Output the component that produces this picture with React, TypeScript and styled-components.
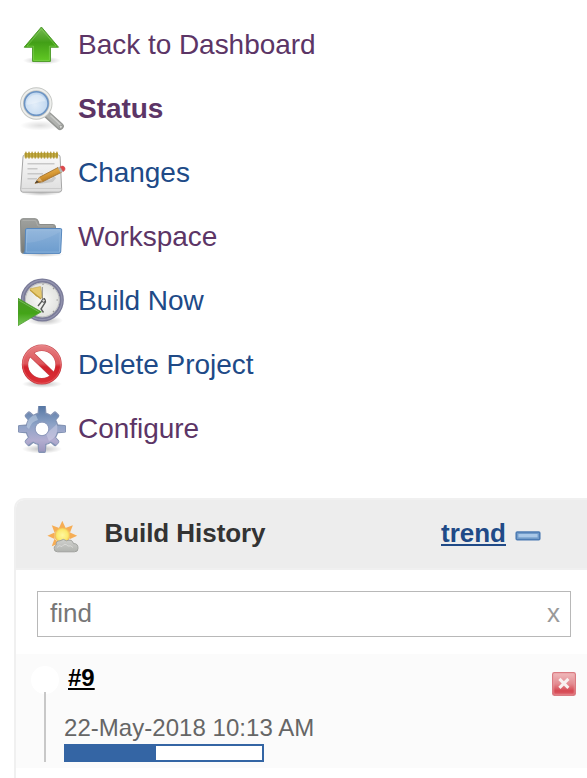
import React from "react";
import styled, { createGlobalStyle, css } from "styled-components";

const GlobalStyle = createGlobalStyle`
  body {
    margin: 0;
    background: #fff;
    font-family: "Liberation Sans", Helvetica, Arial, sans-serif;
    overflow: hidden;
  }
`;

const SidePanel = styled.div`
  width: 587px;
  height: 778px;
  overflow: hidden;
  background: #fff;
`;

const TaskList = styled.nav`
  display: flex;
  flex-direction: column;
  padding: 12px 18px 0;
  height: 498px;
  box-sizing: border-box;
`;

const Task = styled.div`
  display: flex;
  gap: 12px;
  height: 64px;
`;

const TaskIcon = styled.svg`
  flex: none;
  width: 48px;
  height: 48px;
  margin-top: 10px;
  filter: blur(0.6px);
`;

const TaskLink = styled.a<{ $visited?: boolean; $active?: boolean }>`
  font-size: 28px;
  line-height: 66px;
  letter-spacing: -0.03px;
  white-space: nowrap;
  color: ${(p) => (p.$visited ? "#5c3566" : "#204a87")};
  font-weight: ${(p) => (p.$active ? 700 : 400)};
`;

const HistoryPane = styled.section`
  margin-left: 14px;
  height: 300px;
  border: 2px solid #f0f0f0;
  border-right: 0;
  border-radius: 10px 0 0 0;
  box-sizing: border-box;
`;

const PaneHeader = styled.header`
  display: flex;
  align-items: flex-start;
  height: 70px;
  box-sizing: border-box;
  padding: 0 46px 0 31px;
  background: #ededed;
  border-bottom: 2px solid #f0f0f0;
  border-radius: 8px 0 0 0;
  line-height: 66px;
  font-size: 26px;
  font-weight: 700;
`;

const WeatherIcon = styled.svg`
  width: 32px;
  height: 32px;
  margin: 21px 25.5px 0 0;
  filter: blur(0.5px);
`;

const PaneTitle = styled.span`
  flex: 1;
  letter-spacing: -0.06px;
  color: #333;
`;

const underline = css`
  text-decoration: underline;
  text-decoration-thickness: 2px;
  text-underline-offset: 2px;
  text-decoration-skip-ink: none;
`;

const TrendLink = styled.a`
  ${underline}
  color: #204a87;
`;

const CollapseIcon = styled.svg`
  width: 26px;
  height: 10px;
  margin: 31px 0 0 9px;
  filter: blur(0.4px);
`;

const SearchBox = styled.div`
  display: flex;
  justify-content: space-between;
  box-sizing: border-box;
  width: 534px;
  height: 46px;
  margin: 21px 0 17px 21px;
  padding: 0 10px 0 12px;
  border: 1px solid #b8b8b8;
  font-size: 26px;
  line-height: 42px;
  color: #777;
`;

const ClearMark = styled.span`
  color: #999;
`;

const BuildRow = styled.div`
  display: flex;
  height: 114px;
  background: #fbfbfb;
`;

const Timeline = styled.div`
  display: flex;
  flex-direction: column;
  align-items: center;
  width: 28px;
  margin: 12px 5px 6px 15px;
`;

const StatusBall = styled.div`
  width: 28px;
  height: 28px;
  flex: none;
  border-radius: 50%;
  background: #fff;
`;

const TimelineStem = styled.div`
  width: 2px;
  flex: 1;
  margin-top: -2px;
  background: #c8c8c8;
`;

const BuildDetails = styled.div`
  flex: 1;
  display: flex;
  flex-direction: column;
  align-items: flex-start;
  font-size: 24px;
`;

const BuildNumber = styled.a`
  ${underline}
  margin: 9px 0 0 4px;
  line-height: 30px;
  font-weight: 700;
  color: #000;
`;

const BuildDate = styled.span`
  margin-top: 20px;
  line-height: 30px;
  letter-spacing: 0.04px;
  color: #666;
`;

const ProgressBar = styled.div`
  width: 200px;
  height: 18px;
  margin-top: 1px;
  box-sizing: border-box;
  border: 2px solid #3465a4;
  background: #fff;
`;

const ProgressFill = styled.div`
  width: 90px;
  height: 100%;
  background: #3465a4;
`;

const StopIcon = styled.svg`
  width: 26px;
  height: 26px;
  margin: 17px 10px 0 0;
  filter: blur(0.6px);
`;

const UpArrow = () => (
  <TaskIcon viewBox="0 0 48 48">
    <defs>
      <linearGradient id="upFill" x1="0" y1="0" x2="0" y2="1">
        <stop offset="0" stopColor="#79b956" />
        <stop offset=".45" stopColor="#429f17" />
        <stop offset="1" stopColor="#62c924" />
      </linearGradient>
      <radialGradient id="soft">
        <stop offset="0" stopColor="#000" stopOpacity=".26" />
        <stop offset="1" stopColor="#000" stopOpacity="0" />
      </radialGradient>
    </defs>
    <ellipse cx="24" cy="38.5" rx="19" ry="4" fill="url(#soft)" />
    <path d="M23.4 5 40.5 25.2H32.4V39.4H14.6V25.2H6.2Z" fill="url(#upFill)" stroke="#4a9a26" strokeWidth="1" strokeLinejoin="round" />
    <path d="M23.4 7 38 24.2H31.4V38.4H15.6V24.2H9Z" fill="none" stroke="#8edb62" strokeOpacity=".5" />
  </TaskIcon>
);

const Magnifier = () => (
  <TaskIcon viewBox="0 0 48 48">
    <defs>
      <radialGradient id="lens" cx=".45" cy=".55" r=".6">
        <stop offset="0" stopColor="#e2edf9" />
        <stop offset=".6" stopColor="#c9ddf2" />
        <stop offset="1" stopColor="#a3c3e6" />
      </radialGradient>
    </defs>
    <ellipse cx="22" cy="39.5" rx="20" ry="5" fill="url(#soft)" opacity=".5" />
    <path d="M29 28.5 42 40.2" stroke="#949693" strokeWidth="7.6" strokeLinecap="round" />
    <path d="M30 29 42 40" stroke="#b0b2af" strokeWidth="5" strokeLinecap="round" />
    <path d="M33 30 42.5 39" stroke="#c9cac8" strokeWidth="1.5" strokeLinecap="round" />
    <circle cx="42.8" cy="40.8" r="1.6" fill="#d7d7d5" stroke="#8f918d" strokeWidth=".8" />
    <circle cx="18.3" cy="17.5" r="14.2" fill="url(#lens)" stroke="#c3c5c2" strokeWidth="4" />
    <circle cx="18.3" cy="17.5" r="14.3" fill="none" stroke="#eeefed" strokeWidth="2" />
    <circle cx="18.3" cy="17.5" r="11.8" fill="none" stroke="#6c94c4" strokeWidth="1.6" />
    <path d="M8.5 18.5a10 10 0 0 1 19.5-3c-7-1-13 4-19.5 3Z" fill="#fff" opacity=".3" />
  </TaskIcon>
);

const Notepad = () => (
  <TaskIcon viewBox="0 0 48 48">
    <defs>
      <linearGradient id="paper" x1="0" y1="0" x2="0" y2="1">
        <stop offset="0" stopColor="#f9f9f9" />
        <stop offset="1" stopColor="#dedede" />
      </linearGradient>
      <linearGradient id="pencil" x1="0" y1="0" x2=".5" y2="1">
        <stop offset="0" stopColor="#f0c668" />
        <stop offset=".55" stopColor="#d99b37" />
        <stop offset="1" stopColor="#a66a18" />
      </linearGradient>
    </defs>
    <ellipse cx="23" cy="43" rx="20" ry="3" fill="url(#soft)" />
    <path d="M6.5 5H40.5Q42 5 42.1 7L43.7 39.5Q43.7 42.2 41 42.2H4.8Q2.6 42.2 2.7 39.5L5 7Q5 5 6.5 5Z" fill="url(#paper)" stroke="#a6a6a6" />
    <path d="M3.5 38.5H43.3" stroke="#cbcbcb" />
    <rect x="6.5" y="3" width="33.5" height="4.5" fill="#c3ae4a" />
    {Array.from({ length: 11 }, (_, i) => (
      <path key={i} d={`M${7.9 + i * 3.1} 2.4V8`} stroke="#aa8f24" strokeOpacity=".8" strokeWidth="1.6" strokeLinecap="round" />
    ))}
    <path d="M9.5 13.8H36.5M9.5 18.8H19.5M9.5 23.8H25M9.5 28.8H19" stroke="#c8c8c8" strokeWidth="1.5" />
    <path d="M21 32.5 34 30.5 37 27" stroke="#777" strokeOpacity=".25" strokeWidth="3" fill="none" />
    <path d="M17 33.3 21.4 27.3 40 17.5 43.5 22.3 24.5 31.8Z" fill="url(#pencil)" stroke="#9b6929" strokeWidth=".8" />
    <path d="m17 33.3 1.8-2.8 2.2 1.8Z" fill="#484239" />
    <path d="m21.4 27.3-2.6 3.3 5.7 1.2Z" fill="#e6c89a" opacity=".65" />
    <path d="m39.8 17.8 2.5-1.2 3 4.9-2.7 1.3Z" fill="#b6b9b5" />
    <path d="m42.2 16.7 2-.6q2-.2 2.8 2 .5 2.5-1.8 3.4Z" fill="#e04749" stroke="#cd484e" strokeWidth=".6" />
  </TaskIcon>
);

const Folder = () => (
  <TaskIcon viewBox="0 0 48 48">
    <defs>
      <linearGradient id="folderBack" x1="0" y1="0" x2="0" y2="1">
        <stop offset="0" stopColor="#a0a29f" />
        <stop offset="1" stopColor="#777975" />
      </linearGradient>
      <linearGradient id="folderFront" x1="0" y1="0" x2="0" y2="1">
        <stop offset="0" stopColor="#8cb2da" />
        <stop offset="1" stopColor="#6c9cce" />
      </linearGradient>
    </defs>
    <ellipse cx="24" cy="40.5" rx="22" ry="2.5" fill="url(#soft)" opacity=".8" />
    <path d="M4 39.2Q3.2 39 3 37L2.5 7Q2.5 4.7 5 4.7H17.5Q19.7 4.7 20.5 8L21.2 10.5H35.5Q37.4 10.5 37.5 13V37Z" fill="url(#folderBack)" stroke="#8b8d89" />
    <path d="M4.5 6.5H17.5L20 12H35" fill="none" stroke="#b4b6b2" strokeOpacity=".6" />
    <path d="M8.7 14.5H42.7Q43.8 14.5 43.7 16L42.7 38Q42.6 39.4 41 39.4H5.5Q7 38.5 7.1 36L7.5 16Q7.6 14.5 8.7 14.5Z" fill="url(#folderFront)" stroke="#5687bd" />
    <path d="M8.9 15.8H42.4L41.5 38.1H8.2Z" fill="none" stroke="#a4c5e7" strokeOpacity=".5" />
    <path d="M8.3 29Q25 28 42 18V16H8.8Z" fill="#fff" opacity=".08" />
  </TaskIcon>
);

const Clock = () => (
  <TaskIcon viewBox="0 0 48 48">
    <defs>
      <radialGradient id="face">
        <stop offset="0" stopColor="#fafaf8" />
        <stop offset="1" stopColor="#dedfdc" />
      </radialGradient>
      <linearGradient id="playFill" x1="0" y1="0" x2="0" y2="1">
        <stop offset="0" stopColor="#4b9927" />
        <stop offset=".55" stopColor="#43a417" />
        <stop offset="1" stopColor="#77c658" />
      </linearGradient>
    </defs>
    <ellipse cx="27" cy="42.5" rx="18" ry="5" fill="url(#soft)" />
    <circle cx="24.3" cy="22" r="19.4" fill="url(#face)" stroke="#7a7b98" strokeWidth="4.3" />
    <circle cx="24.3" cy="22" r="19.7" fill="none" stroke="#9495b0" strokeWidth="1.2" />
    <circle cx="24.3" cy="22" r="16.9" fill="none" stroke="#bcbcbe" />
    <path d="M25 5.5V7M40 22H38.5M36 10l-1 1M36 34l-1-1" stroke="#999" strokeWidth="1.2" />
    <path d="M11.8 10.8 22.5 8.6 24.5 20 18 18Z" fill="#e6c96e" stroke="#c9ad59" strokeWidth=".7" />
    <path d="m12 12 11 9" stroke="#c09d3c" strokeWidth="1.1" />
    <path d="M24.3 9V21" stroke="#83817b" strokeWidth=".9" />
    <path d="m20 28 4-5 2.5-2 1 3-4.5 7 2.5 3.5" fill="none" stroke="#5c5e5c" strokeWidth="1.4" />
    <circle cx="25.6" cy="22.6" r="1.7" fill="#ddd" stroke="#444" />
    <path d="M0 20.3 23.3 33.8 0 47.6Z" fill="url(#playFill)" stroke="#4c9a2f" strokeWidth=".8" />
    <path d="M.5 22 20.8 33.8" stroke="#82bf67" strokeWidth=".8" />
  </TaskIcon>
);

const Prohibited = () => (
  <TaskIcon viewBox="0 0 48 48">
    <defs>
      <linearGradient id="banFill" gradientUnits="userSpaceOnUse" x1="0" y1="2" x2="0" y2="43">
        <stop offset="0" stopColor="#e58285" />
        <stop offset=".48" stopColor="#de555a" />
        <stop offset=".56" stopColor="#d2222b" />
        <stop offset="1" stopColor="#dc3239" />
      </linearGradient>
    </defs>
    <ellipse cx="24" cy="42" rx="20" ry="4" fill="url(#soft)" />
    <circle cx="23.8" cy="22.5" r="16.8" fill="none" stroke="#c2484e" strokeWidth="6.4" />
    <path d="m12.5 11.5 23 22" stroke="#c2484e" strokeWidth="6" />
    <circle cx="23.8" cy="22.5" r="16.8" fill="none" stroke="url(#banFill)" strokeWidth="5.6" />
    <path d="m12 11 24 23" stroke="url(#banFill)" strokeWidth="5" />
    <circle cx="23.8" cy="22.5" r="18.8" fill="none" stroke="#f09a9a" strokeOpacity=".4" strokeWidth=".9" />
  </TaskIcon>
);

const diagonalTooth = "M20.6 9 20.9 2.8Q21 1.4 22.2 1.4H25.8Q27 1.4 27.1 2.8L27.4 9Z";
const straightTooth = "M20 9 20.7.4Q20.8-.9 22-.9H26Q27.2-.9 27.3.4L28 9Z";

const Gear = () => (
  <TaskIcon viewBox="0 0 48 48">
    <defs>
      <linearGradient id="gearFill" gradientUnits="userSpaceOnUse" x1="0" y1="0" x2="0" y2="46">
        <stop offset="0" stopColor="#5677a4" />
        <stop offset=".4" stopColor="#8ca2c6" />
        <stop offset=".75" stopColor="#b2add0" />
        <stop offset="1" stopColor="#9b95bd" />
      </linearGradient>
      <mask id="gearHole">
        <rect width="48" height="48" fill="#fff" />
        <circle cx="24" cy="22.8" r="6.4" fill="#000" />
      </mask>
    </defs>
    <ellipse cx="24" cy="43" rx="20" ry="4.5" fill="url(#soft)" />
    <g mask="url(#gearHole)">
      <g fill="#8191b3" stroke="#8393b4" strokeWidth="1.2">
        {[0, 90, 180, 270].map((angle) => (
          <path key={angle} d={straightTooth} transform={`rotate(${angle} 24 22.8)`} />
        ))}
        {[45, 135, 225, 315].map((angle) => (
          <path key={angle} d={diagonalTooth} transform={`rotate(${angle} 24 22.8)`} />
        ))}
        <circle cx="24" cy="22.8" r="16" />
      </g>
      <g fill="url(#gearFill)">
        <circle cx="24" cy="22.8" r="15.4" />
        <path d="M20.8 10V0H27.2V10ZM20.8 35V45.5H27.2V35ZM11 20H1V26H11ZM37 20H47V26H37Z" />
        <path d="m15 10-4.5-3-3 3 4 6ZM33 10l4.5-3 3 3-4 6ZM11 31l-4 5 3 3 6-4ZM37 31l4 5-3 3-6-4Z" />
      </g>
      <path d="M8.7 21C9 13 14 9 18 9l2 5c-6 2-6 3-9 9Z" fill="#c9d8e9" opacity=".5" />
      <path d="M28 28 39 18q2 13-8 17Z" fill="#deddf0" opacity=".4" />
    </g>
    <circle cx="24" cy="22.8" r="6.9" fill="none" stroke="#8c98ba" strokeWidth=".9" />
  </TaskIcon>
);

const Weather = () => (
  <WeatherIcon viewBox="0 0 32 32">
    <defs>
      <radialGradient id="sun">
        <stop offset="0" stopColor="#fff79f" />
        <stop offset=".7" stopColor="#fbea70" />
        <stop offset="1" stopColor="#f5c453" />
      </radialGradient>
      <linearGradient id="cloud" x1="0" y1="0" x2="0" y2="1">
        <stop offset="0" stopColor="#cfd0cd" />
        <stop offset="1" stopColor="#b1b3af" />
      </linearGradient>
    </defs>
    <g fill="#f6ad55">
      {[0, 45, 90, 225, 270, 315].map((angle) => (
        <path key={angle} d="m12 7 3.3-7.2L18.6 7Z" transform={`rotate(${angle} 15.3 14.7)`} />
      ))}
    </g>
    <circle cx="15.4" cy="14.2" r="7.6" fill="url(#sun)" stroke="#f2b150" strokeWidth=".8" />
    <path d="M10.5 30.8Q7 30.7 7.2 27.6 6.5 25.5 9.3 24 8.5 19.8 13 19.8 16.5 17 19.5 19.8 25 17.5 26.5 22.6 31.2 22.4 31 27.4 31.2 30.8 27.5 30.8Z" fill="url(#cloud)" stroke="#a0a29e" />
    <path d="M10 26.5q2-3 5-1 3-4 6-.5 3-1 5 1.5" fill="none" stroke="#e7e8e5" strokeOpacity=".6" />
  </WeatherIcon>
);

const Collapse = () => (
  <CollapseIcon viewBox="0 0 26 10">
    <rect x="1.2" y="1" width="23.6" height="7.8" rx="1" fill="#719bc9" stroke="#4c7bb3" strokeWidth="1.5" />
    <rect x="3.4" y="3" width="19.2" height="3.4" fill="#a9c8e8" />
  </CollapseIcon>
);

const Stop = () => (
  <StopIcon viewBox="0 0 26 26">
    <defs>
      <linearGradient id="stopFill" x1="0" y1="0" x2="0" y2="1">
        <stop offset="0" stopColor="#f0bcbe" />
        <stop offset=".5" stopColor="#e38a90" />
        <stop offset=".8" stopColor="#d64852" />
        <stop offset="1" stopColor="#dd616a" />
      </linearGradient>
    </defs>
    <rect x="1.6" y="1.6" width="22.8" height="22.8" rx="1.8" fill="url(#stopFill)" stroke="#da7b82" strokeWidth="1.2" />
    <rect x="2.8" y="2.8" width="20.4" height="20.4" rx="1" fill="none" stroke="#efabb0" strokeOpacity=".5" />
    <path d="m8.4 7.9 9 9m0-9-9 9" stroke="#f8f0f0" strokeWidth="3" />
  </StopIcon>
);

const tasks = [
  { label: "Back to Dashboard", Icon: UpArrow, visited: true },
  { label: "Status", Icon: Magnifier, visited: true, active: true },
  { label: "Changes", Icon: Notepad },
  { label: "Workspace", Icon: Folder, visited: true },
  { label: "Build Now", Icon: Clock },
  { label: "Delete Project", Icon: Prohibited },
  { label: "Configure", Icon: Gear, visited: true },
];

export default function App() {
  return (
    <>
      <GlobalStyle />
      <SidePanel>
        <TaskList>
          {tasks.map(({ label, Icon, visited, active }) => (
            <Task key={label}>
              <Icon />
              <TaskLink $visited={visited} $active={active}>{label}</TaskLink>
            </Task>
          ))}
        </TaskList>
        <HistoryPane>
          <PaneHeader>
            <Weather />
            <PaneTitle>Build History</PaneTitle>
            <TrendLink>trend</TrendLink>
            <Collapse />
          </PaneHeader>
          <SearchBox>
            <span>find</span>
            <ClearMark>x</ClearMark>
          </SearchBox>
          <BuildRow>
            <Timeline>
              <StatusBall />
              <TimelineStem />
            </Timeline>
            <BuildDetails>
              <BuildNumber>#9</BuildNumber>
              <BuildDate>22-May-2018 10:13 AM</BuildDate>
              <ProgressBar>
                <ProgressFill />
              </ProgressBar>
            </BuildDetails>
            <Stop />
          </BuildRow>
        </HistoryPane>
      </SidePanel>
    </>
  );
}
